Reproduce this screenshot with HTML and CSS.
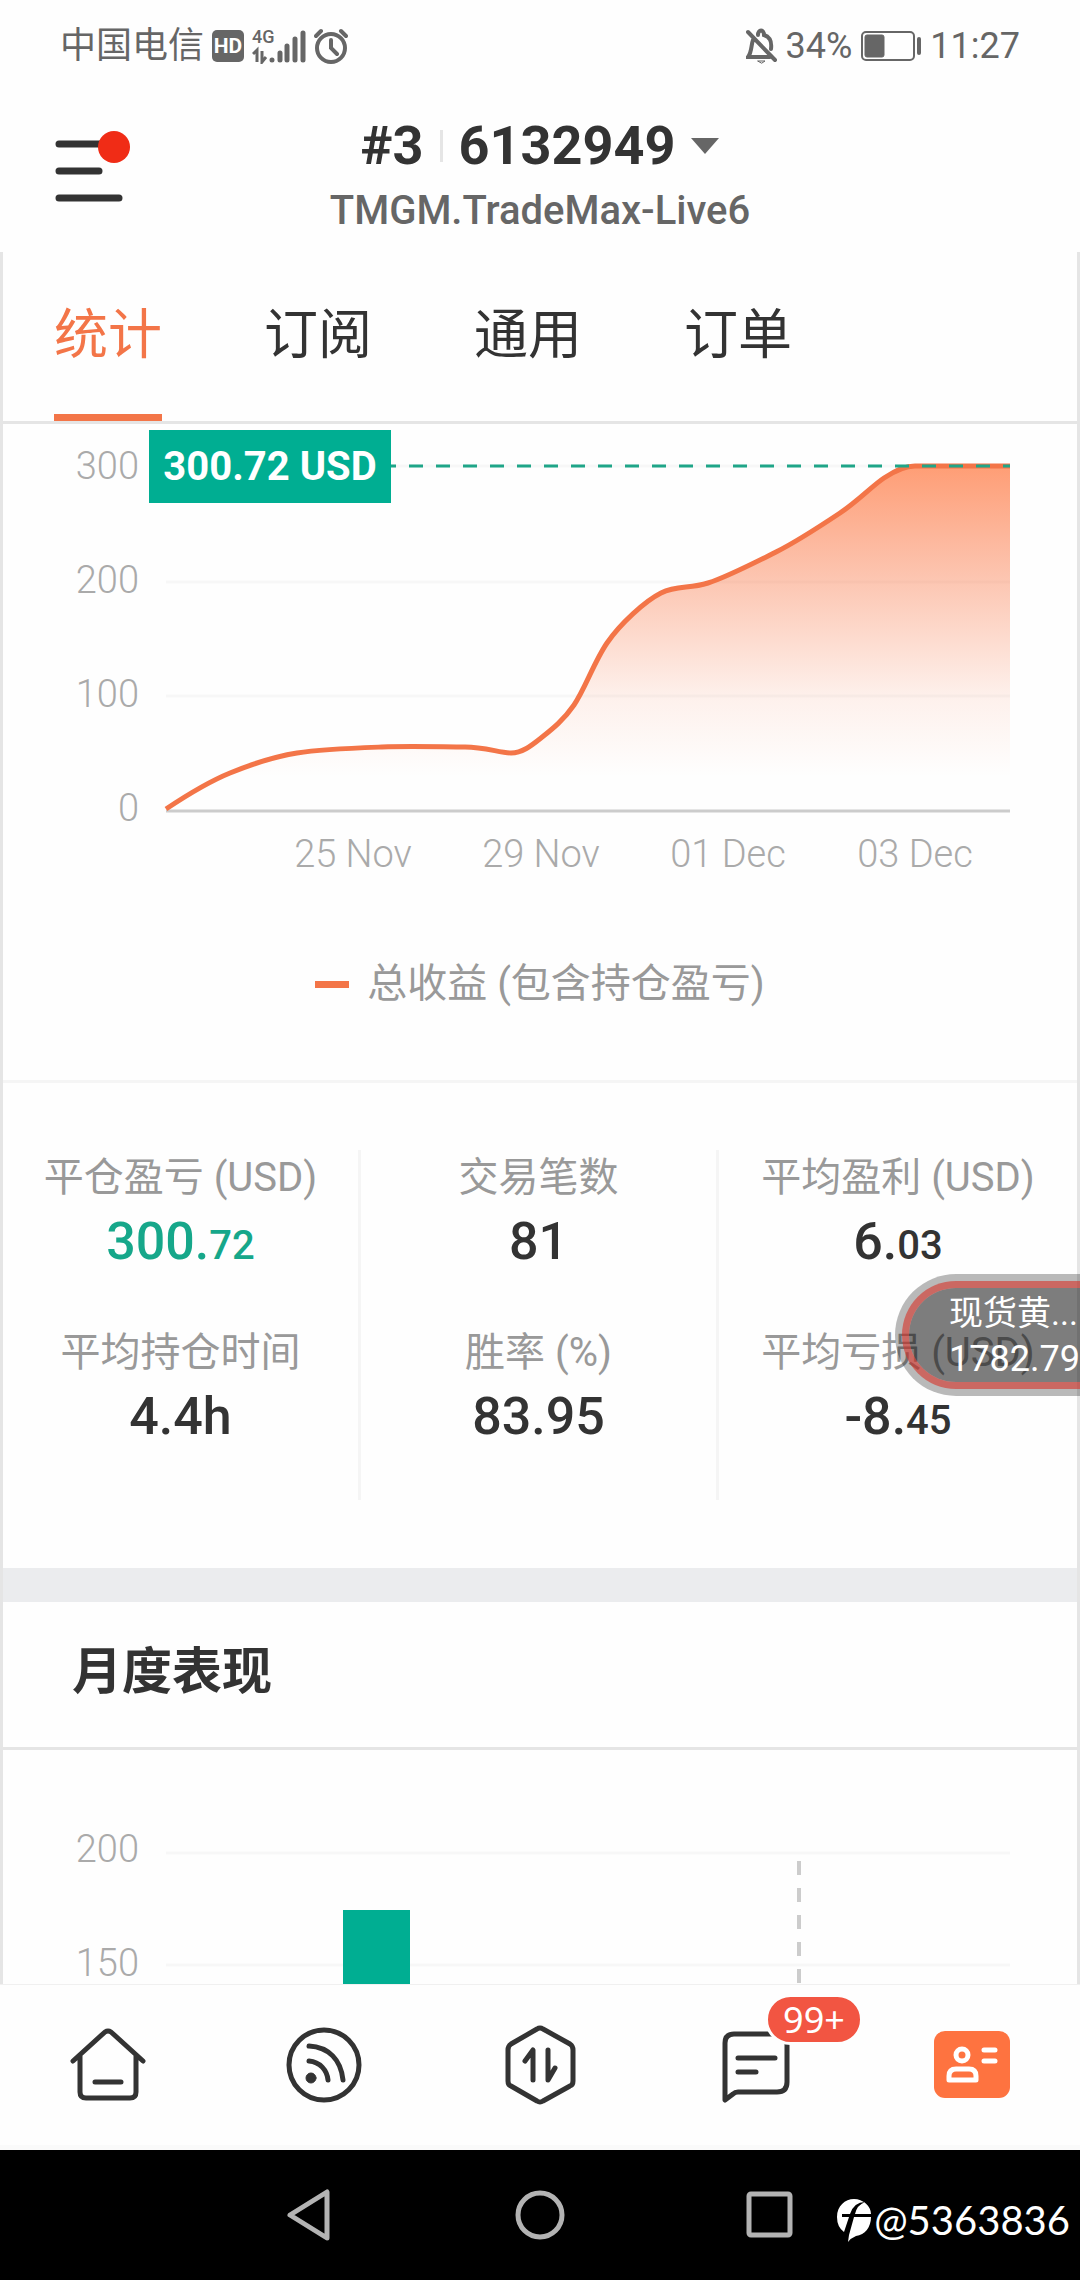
FILE: index.html
```html
<!DOCTYPE html>
<html lang="zh-CN">
  <head>
    <meta charset="UTF-8" />
    <meta name="viewport" content="width=device-width, initial-scale=1.0" />
    <title>TMGM.TradeMax-Live6</title>
    <link rel="stylesheet" href="styles.css">
  </head>
  <body>
    <div id="statusbar">
      <div class="status-side">
        <span>中国电信</span>
        <span class="hd">HD</span>
        <svg class="signal" width="54" height="36" viewBox="0 0 54 36">
          <text x="0" y="15">4G</text>
          <path d="M1 26 L5 22 V34 M10 23 V34 L14 29" stroke-width="3" fill="none" />
          <path d="M20 32 V32 M28 25 V32 M35 18 V32 M43 11 V32 M51 5 V32" stroke-width="5" stroke-linecap="round" />
        </svg>
        <svg class="line-icon" width="34" height="36" viewBox="0 0 34 36">
          <circle cx="17" cy="20" r="14" />
          <path d="M17 12 V20 L23 26 M2 8 L7 3 M27 3 L32 8" />
        </svg>
      </div>
      <div class="status-side">
        <svg class="line-icon" width="32" height="36" viewBox="0 0 32 36">
          <path d="M2 4 L29 32 M7 12 C5 17 6 24 2 29 H24 M12 7 C12 1 18 1 18 7 C24 9 26 13 25 21" />
          <path d="M12 33 H19 L16 35 Z" stroke-width="1" />
        </svg>
        <span>34%</span>
        <svg class="battery" width="62" height="32" viewBox="0 0 62 32">
          <rect x="2" y="2" width="52" height="28" rx="4" fill="none" stroke-width="2" />
          <rect x="5" y="5" width="19" height="22" rx="2" />
          <path d="M59 9 V23" stroke-width="4" stroke-linecap="round" />
        </svg>
        <span>11:27</span>
      </div>
    </div>

    <header>
      <button type="button" class="menu" aria-label="菜单">
        <svg width="76" height="72" viewBox="0 0 76 72">
          <path d="M4 14 H50 M4 41 H44 M4 68 H64" />
          <circle cx="59" cy="17" r="16" />
        </svg>
      </button>
      <button type="button" class="account">
        <span class="account-no">
          <span>#3</span>
          <i class="bar"></i>
          <span>6132949</span>
          <i class="arrow"></i>
        </span>
        <span class="server">TMGM.TradeMax-Live6</span>
      </button>
    </header>

    <main>
      <nav class="tabs">
        <a href="#stat" class="on">统计</a>
        <a href="#follow">订阅</a>
        <a href="#common">通用</a>
        <a href="#order">订单</a>
      </nav>

      <!-- 收益曲线 -->
      <section id="stat">
        <svg class="chart" viewBox="0 0 1074 466">
          <defs>
            <linearGradient id="fade" x1="0" y1="42" x2="0" y2="387" gradientUnits="userSpaceOnUse">
              <stop offset="0" stop-color="#ff7840" stop-opacity="0.72" />
              <stop offset="0.33" stop-color="#fa7848" stop-opacity="0.42" />
              <stop offset="0.67" stop-color="#fa7848" stop-opacity="0.1" />
              <stop offset="0.9" stop-color="#fa7848" stop-opacity="0" />
            </linearGradient>
          </defs>
          <path class="grid" d="M163 42 H1007 M163 158 H1007 M163 272 H1007" />
          <path fill="url(#fade)" d="M163 385 C184 371 205 358 227 349 S269 333 294 329 S351 324 379 323 S442 323 462 323 S497 329 508 329 S528 322 538 314 S560 297 571 281 S591 238 604 219 S642 177 658 169 S686 165 705 159 S751 139 773 128 S819 101 837 89 S869 62 881 54 S902 42 912 42 H1007 V387 H163 Z" />
          <path class="axis" d="M163 387 H1007" />
          <path class="curve" d="M163 385 C184 371 205 358 227 349 S269 333 294 329 S351 324 379 323 S442 323 462 323 S497 329 508 329 S528 322 538 314 S560 297 571 281 S591 238 604 219 S642 177 658 169 S686 165 705 159 S751 139 773 128 S819 101 837 89 S869 62 881 54 S902 42 912 42 H1007" />
          <path class="now" d="M163 42 H1007" />
          <g class="ylabel">
            <text x="136" y="55">300</text>
            <text x="136" y="169">200</text>
            <text x="136" y="283">100</text>
            <text x="136" y="397">0</text>
          </g>
          <g class="xlabel">
            <text x="350" y="443">25 Nov</text>
            <text x="538" y="443">29 Nov</text>
            <text x="725" y="443">01 Dec</text>
            <text x="912" y="443">03 Dec</text>
          </g>
          <rect class="green" x="146" y="6" width="242" height="73" />
          <text class="tip" x="267" y="56">300.72 USD</text>
        </svg>
        <p class="legend"><i></i>总收益 (包含持仓盈亏)</p>
      </section>

      <section class="stats">
        <dl>
          <dt>平仓盈亏 (USD)</dt>
          <dd class="up">300.<small>72</small></dd>
          <dt>平均持仓时间</dt>
          <dd>4.4h</dd>
        </dl>
        <dl>
          <dt>交易笔数</dt>
          <dd>81</dd>
          <dt>胜率 (%)</dt>
          <dd>83.95</dd>
        </dl>
        <dl>
          <dt>平均盈利 (USD)</dt>
          <dd>6.<small>03</small></dd>
          <dt>平均亏损 (USD)</dt>
          <dd>-8.<small>45</small></dd>
        </dl>
      </section>

      <!-- 月度表现 -->
      <section class="month">
        <h2>月度表现</h2>
        <svg class="chart" viewBox="0 0 1074 240">
          <path class="grid" d="M163 103 H1007 M163 215 H1007" />
          <g class="ylabel">
            <text x="136" y="112">200</text>
            <text x="136" y="226">150</text>
          </g>
          <rect class="green" x="340" y="160" width="67" height="80" />
          <path class="split" d="M796 111 V240" />
        </svg>
      </section>
    </main>

    <button type="button" class="float">
      <span class="quote">
        <span>现货黄...</span>
        <span class="price">1782.79</span>
      </span>
    </button>

    <nav class="bottom">
      <a href="#home" aria-label="首页">
        <svg width="80" height="80" viewBox="0 0 80 80">
          <path d="M5 36 L37 7 Q40 5 43 7 L75 36 M12 31 V67 Q12 73 18 73 H62 Q68 73 68 67 V31 M27 57 H53" />
        </svg>
      </a>
      <a href="#feed" aria-label="动态">
        <svg width="80" height="80" viewBox="0 0 80 80">
          <circle cx="40" cy="40" r="35" />
          <path d="M25 21 C45 22 57 35 59 55 M25 36 C36 37 43 45 44 55" />
          <circle class="dot" cx="27" cy="53" r="5" />
        </svg>
      </a>
      <a href="#trade" aria-label="交易">
        <svg width="80" height="80" viewBox="0 0 80 80">
          <path d="M37 4 Q40 2 43 4 L70 19 Q73 21 73 25 V56 Q73 60 70 61 L43 76 Q40 78 37 76 L11 61 Q8 60 8 56 V25 Q8 21 11 19 Z" />
          <path d="M25 36 L33 25 V55 M48 25 V55 L55 43" />
        </svg>
      </a>
      <a href="#message" aria-label="消息">
        <svg width="80" height="80" viewBox="0 0 80 80">
          <path d="M9 75 V18 Q9 9 18 9 H71 V57 Q71 67 61 67 H22 Q19 67 17 69 Z M22 33 H59 M22 47 H40" />
        </svg>
        <span class="badge">99+</span>
      </a>
      <a href="#me" aria-label="我的">
        <svg width="80" height="80" viewBox="0 0 80 80">
          <rect class="card" x="2" y="6" width="76" height="67" rx="11" />
          <g class="white">
            <circle cx="30" cy="30" r="6" />
            <path d="M17 55 V51 Q17 44 24 44 H37 Q44 44 44 51 V55 Z M52 25 H63 M52 36 H63" />
          </g>
        </svg>
      </a>
    </nav>

    <div id="sysbar">
      <button type="button" aria-label="返回">
        <svg width="50" height="54" viewBox="0 0 50 54">
          <path d="M42 4 V50 L5 27 Z" />
        </svg>
      </button>
      <button type="button" aria-label="主屏幕">
        <svg width="50" height="54" viewBox="0 0 50 54">
          <circle cx="25" cy="27" r="22" />
        </svg>
      </button>
      <button type="button" aria-label="最近任务">
        <svg width="50" height="54" viewBox="0 0 50 54">
          <rect x="4" y="6" width="41" height="41" rx="2" />
        </svg>
      </button>
      <div class="author">
        <svg width="36" height="44" viewBox="0 0 36 44">
          <path fill="#fff" d="M18 1 C27 1 35 8 35 16 H19 Q21 7 29 4 Q18 4 14 16 H6 V19 H13 L8 34 Q1 29 1 19 C1 8 9 1 18 1 Z" />
          <path fill="#fff" d="M18 19 H35 C35 29 29 37 20 38 Q15 40 12 44 L13 37 Z" />
        </svg>
        <span>@5363836</span>
      </div>
    </div>
  </body>
</html>
```

FILE: styles.css
```css
* {
  padding: 0;
  margin: 0;
  box-sizing: border-box;
}
body {
  height: 100vh;
  display: flex;
  flex-direction: column;
  background: #fefefe;
  color: #333;
  font-family: Roboto, "Noto Sans CJK SC", sans-serif;
  position: relative;
  overflow: hidden;
}
button {
  border: 0;
  background: none;
  color: inherit;
  font-family: inherit;
}
a {
  color: inherit;
  text-decoration: none;
}
svg {
  display: block;
}

/* 状态栏 */
#statusbar {
  height: 92px;
  padding: 0 60px;
  display: flex;
  justify-content: space-between;
  align-items: center;
  color: #666;
  font-size: 36px;
  line-height: 56px;
}
.status-side {
  display: flex;
  align-items: center;
  gap: 8px;
}
.hd {
  width: 32px;
  height: 32px;
  border-radius: 5px;
  background: #666;
  color: #fff;
  font-size: 21px;
  font-weight: 700;
  line-height: 32px;
  text-align: center;
}
.signal,
.battery {
  fill: #666;
  stroke: #666;
}
.signal text {
  font-size: 18px;
  font-weight: 500;
  stroke: none;
}
.line-icon {
  fill: none;
  stroke: #666;
  stroke-width: 4;
  stroke-linecap: round;
}

/* 账户 */
header {
  display: grid;
  grid-template-columns: 1fr auto 1fr;
  align-items: start;
  padding: 20px 55px 10px;
}
.menu {
  justify-self: start;
  padding-top: 18px;
}
.menu svg {
  fill: #f02c16;
}
.menu path {
  stroke: #333;
  stroke-width: 7;
  stroke-linecap: round;
}
.account {
  display: flex;
  flex-direction: column;
  align-items: center;
}
.account-no {
  display: flex;
  align-items: center;
  gap: 16px;
  font-size: 54px;
  font-weight: 700;
  line-height: 68px;
}
.bar {
  width: 3px;
  height: 32px;
  background: #e5e5e5;
}
.arrow {
  border: 14px solid transparent;
  border-top: 16px solid #666;
  border-bottom: 0;
}
.server {
  color: #666;
  font-size: 40px;
  font-weight: 500;
  line-height: 62px;
}

main {
  flex: 1;
  min-height: 0;
  overflow: hidden;
  border: solid #e5e5e5;
  border-width: 0 3px;
}
.tabs {
  display: flex;
  gap: 102px;
  padding: 0 51px;
  border-bottom: 3px solid #e5e5e5;
  font-size: 54px;
  line-height: 80px;
}
.tabs a {
  padding: 44px 0 38px;
  border-bottom: 7px solid transparent;
}
.tabs .on {
  color: #f37548;
  border-color: #f37548;
}

/* 图表 */
.chart {
  width: 100%;
  height: auto;
  fill: none;
  font-size: 38px;
}
.grid {
  stroke: #f7f7f7;
  stroke-width: 3;
}
.axis {
  stroke: #ccc;
  stroke-width: 3;
}
.curve {
  stroke: #f37548;
  stroke-width: 5;
}
.now {
  stroke: #1fa588;
  stroke-width: 3;
  stroke-dasharray: 14 13;
}
.green {
  fill: #00ae92;
}
.split {
  stroke: #ccc;
  stroke-width: 4;
  stroke-dasharray: 14 13;
}
.ylabel,
.xlabel {
  fill: #aaa;
  font-weight: 300;
  text-anchor: end;
}
.xlabel {
  text-anchor: middle;
}
.tip {
  fill: #fff;
  font-size: 40px;
  font-weight: 700;
  text-anchor: middle;
}
.legend {
  display: flex;
  justify-content: center;
  align-items: center;
  gap: 18px;
  padding: 64px 0 66px;
  color: #999;
  font-size: 40px;
  line-height: 60px;
}
.legend i {
  width: 34px;
  height: 7px;
  background: #f37548;
}

.stats {
  display: grid;
  grid-template-columns: repeat(3, 1fr);
  padding: 67px 0 68px;
  border-top: 3px solid #f5f5f5;
  text-align: center;
}
.stats dl {
  border-right: 3px solid #f5f5f5;
}
.stats dl:last-child {
  border-right: 0;
}
.stats dt {
  padding-top: 2px;
  color: #999;
  font-size: 40px;
  line-height: 52px;
}
.stats dd {
  margin-bottom: 45px;
  font-size: 52px;
  font-weight: 500;
  line-height: 76px;
}
.stats small {
  font-size: 40px;
  line-height: 40px;
}
.stats .up {
  color: #16a78a;
}

.month {
  border-top: 34px solid #ebecee;
}
.month h2 {
  padding: 34px 69px 39px;
  border-bottom: 3px solid #e5e5e5;
  font-size: 50px;
  line-height: 72px;
}

/* 悬浮报价 */
.float {
  position: absolute;
  top: 1274px;
  right: 0;
  padding: 7px 0 7px 7px;
  border-radius: 61px 0 0 61px;
  background: rgba(0, 0, 0, 0.27);
  color: #fff;
  font-size: 34px;
  text-align: left;
}
.quote {
  display: block;
  padding: 2px 0 0 40px;
  border: 7px solid rgba(215, 50, 40, 0.6);
  border-right: 0;
  border-radius: 54px 0 0 54px;
  background: rgba(0, 0, 0, 0.32);
  background-clip: padding-box;
  line-height: 46px;
}
.quote span {
  display: block;
}
.quote .price {
  font-size: 36px;
}

/* 底部导航 */
.bottom {
  display: grid;
  grid-template-columns: repeat(5, 1fr);
  justify-items: center;
  align-items: center;
  height: 166px;
  border-top: 1px solid #f0f0f0;
  border-bottom: 5px solid #fafafa;
}
.bottom a {
  position: relative;
}
.bottom svg {
  fill: none;
  stroke: #333;
  stroke-width: 5;
  stroke-linecap: round;
  stroke-linejoin: round;
}
.bottom .dot {
  fill: #333;
  stroke-width: 1;
}
.bottom .card {
  fill: #fe7340;
  stroke: none;
}
.bottom .white {
  stroke: #fff;
  stroke-width: 5;
}
.badge {
  position: absolute;
  left: 49px;
  top: -31px;
  width: 98px;
  border: 3px solid #fefefe;
  border-radius: 26px;
  background: #f25542;
  color: #fff;
  font-family: "Noto Sans", sans-serif;
  font-size: 36px;
  line-height: 45px;
  text-align: center;
}

#sysbar {
  position: relative;
  height: 130px;
  display: flex;
  justify-content: center;
  align-items: center;
  gap: 180px;
  background: #000;
}
#sysbar button svg {
  fill: none;
  stroke: #b3b3b3;
  stroke-width: 5;
  stroke-linejoin: round;
}
.author {
  position: absolute;
  right: 10px;
  bottom: 36px;
  display: flex;
  align-items: center;
  gap: 2px;
  color: #fff;
  font-family: Lato, sans-serif;
  font-size: 40px;
}
```
